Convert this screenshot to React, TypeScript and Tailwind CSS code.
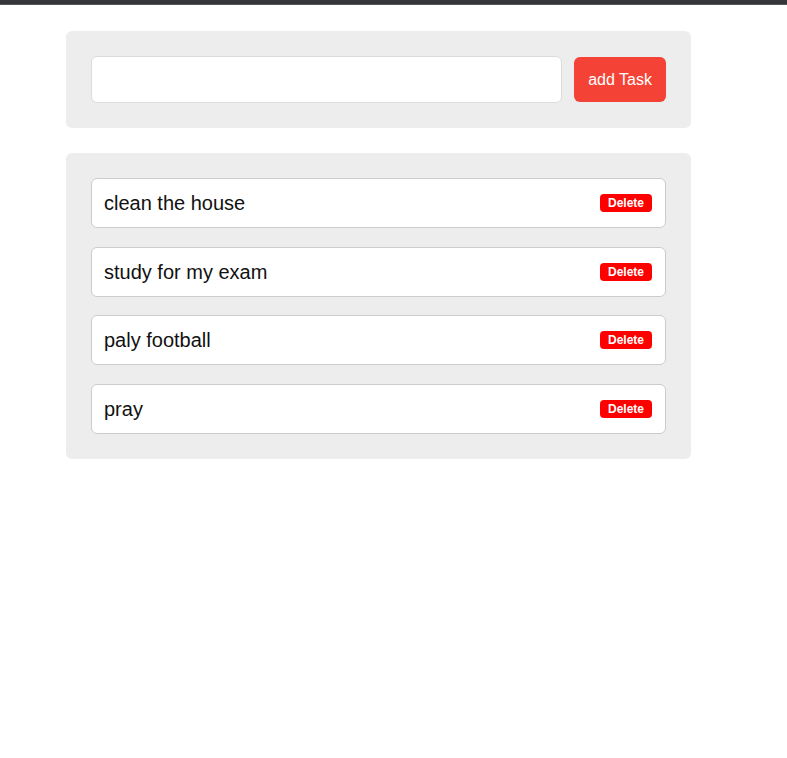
import { useState } from "react";

const INITIAL_TASKS = ["clean the house", "study for my exam", "paly football", "pray"];

export default function App() {
  const [tasks, setTasks] = useState<string[]>(INITIAL_TASKS);
  const [text, setText] = useState("");

  function addTask() {
    if (!text.trim()) return;
    setTasks([...tasks, text.trim()]);
    setText("");
  }

  return (
    <div className="min-h-[758px] bg-white font-['Liberation_Sans',Arial,sans-serif]">
      <div className="h-[5px] bg-[#35363a] border-b border-[#55565a]" />
      <main className="ml-[66px] w-[625px] pt-[26px]">
        <div className="flex items-center gap-3 rounded-md bg-[#ededed] p-[25px]">
          <input
            value={text}
            onChange={(e) => setText(e.target.value)}
            className="h-[47px] flex-1 rounded-md border border-[#dcdcdc] bg-white px-3 text-base outline-none"
          />
          <button
            type="button"
            onClick={addTask}
            className="h-[45px] w-[92px] rounded-md bg-[#f44336] text-base text-white"
          >
            add Task
          </button>
        </div>

        <div className="mt-[25px] flex flex-col gap-[18.7px] rounded-md bg-[#ededed] p-[25px]">
          {tasks.map((task, i) => (
            <div
              key={i}
              className="flex h-[50px] items-center justify-between rounded-md border border-[#cccccc] bg-white pl-3 pr-[13px]"
            >
              <span className="text-[20px] text-[#111]">{task}</span>
              <button
                type="button"
                onClick={() => setTasks(tasks.filter((_, j) => j !== i))}
                className="h-[18px] rounded bg-[#ff0000] px-2 text-[12px] leading-[18px] font-bold text-white"
              >
                Delete
              </button>
            </div>
          ))}
        </div>
      </main>
    </div>
  );
}
